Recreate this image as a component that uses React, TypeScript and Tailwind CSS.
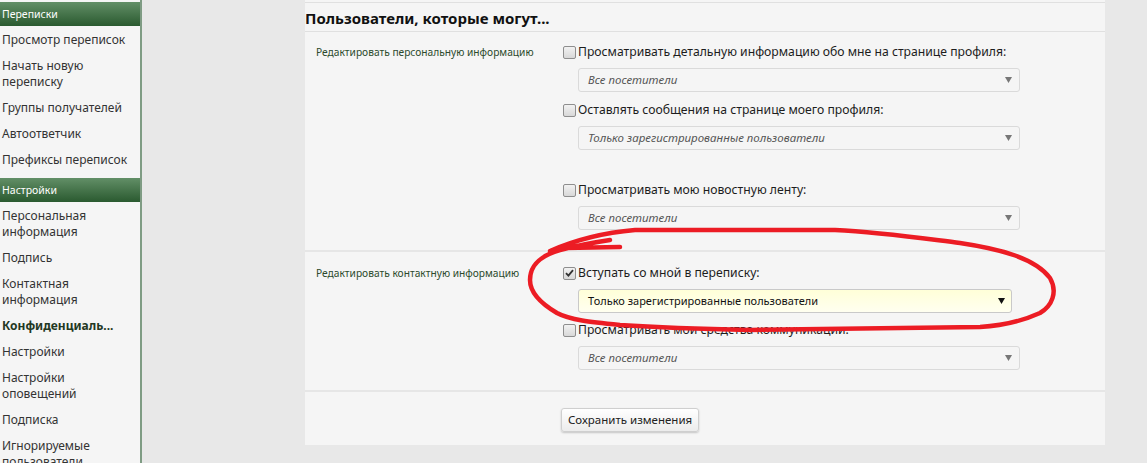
import React from "react";

type NavItem = {
  lines: string[];
  bold?: boolean;
};

type NavGroup = {
  title: string;
  items: NavItem[];
};

const navGroups: NavGroup[] = [
  {
    title: "Переписки",
    items: [
      { lines: ["Просмотр переписок"] },
      { lines: ["Начать новую", "переписку"] },
      { lines: ["Группы получателей"] },
      { lines: ["Автоответчик"] },
      { lines: ["Префиксы переписок"] },
    ],
  },
  {
    title: "Настройки",
    items: [
      { lines: ["Персональная", "информация"] },
      { lines: ["Подпись"] },
      { lines: ["Контактная", "информация"] },
      { lines: ["Конфиденциаль..."], bold: true },
      { lines: ["Настройки"] },
      { lines: ["Настройки", "оповещений"] },
      { lines: ["Подписка"] },
      { lines: ["Игнорируемые", "пользователи"] },
    ],
  },
];

function Sidebar() {
  return (
    <aside className="w-[142px] shrink-0 border-r-2 border-[#7f9c84] bg-[#f5f5f5]">
      {navGroups.map((group, gi) => (
        <div key={group.title}>
          <div
            className={`h-[24px] bg-gradient-to-b from-[#628f67] to-[#2a5a30] pl-[2px] text-[10.5px] leading-[24px] text-white ${
              gi === 0 ? "mt-[2px]" : "mt-[6px]"
            }`}
          >
            {group.title}
          </div>
          {group.items.map((item, i) => (
            <div
              key={i}
              className={`pb-[4px] pl-[2px] pt-[6px] text-[12px] leading-[16px] whitespace-nowrap ${
                item.bold ? "font-bold text-[#233823]" : "text-[#333333]"
              }`}
            >
              {item.lines.map((line, li) => (
                <div key={li}>{line}</div>
              ))}
            </div>
          ))}
        </div>
      ))}
    </aside>
  );
}

function Checkbox({ checked = false }: { checked?: boolean }) {
  return (
    <span className="flex h-[13px] w-[13px] shrink-0 items-center justify-center rounded-[2px] border border-[#8e8e8e] bg-gradient-to-b from-[#f2f2f2] to-[#d8d8d8]">
      {checked && (
        <svg width="9" height="8" viewBox="0 0 9 8">
          <path d="M1 4.2 L3.4 6.6 L8 1.2" fill="none" stroke="#333" strokeWidth="1.8" />
        </svg>
      )}
    </span>
  );
}

function Arrow({ dark = false }: { dark?: boolean }) {
  return (
    <svg width="7" height="6" viewBox="0 0 7 6">
      <path d="M0 0 H7 L3.5 6 Z" fill={dark ? "#111" : "#777"} />
    </svg>
  );
}

function Select({ value, active = false }: { value: string; active?: boolean }) {
  if (active) {
    return (
      <div className="ml-[15px] mt-[8px] flex h-[24px] w-[434px] items-center justify-between rounded-[3px] border border-[#c9c9c9] bg-gradient-to-b from-[#ffffd8] to-[#fffff0] pl-[9px] pr-[6px] text-[11px] text-[#111]">
        <span>{value}</span>
        <Arrow dark />
      </div>
    );
  }
  return (
    <div className="ml-[15px] mt-[8px] flex h-[24px] w-[442px] items-center justify-between rounded-[3px] border border-[#dadada] bg-[#f5f5f5] pl-[9px] pr-[7px] text-[11.5px] italic text-[#555]">
      <span>{value}</span>
      <Arrow />
    </div>
  );
}

function Option({
  label,
  value,
  checked,
  active,
  className = "",
}: {
  label: string;
  value: string;
  checked?: boolean;
  active?: boolean;
  className?: string;
}) {
  return (
    <div className={className}>
      <div className="flex h-[16px] items-center gap-[2px] text-[12.2px] leading-[16px] text-[#1d1d1d]">
        <Checkbox checked={checked} />
        <span className="whitespace-nowrap">{label}</span>
      </div>
      <Select value={value} active={active} />
    </div>
  );
}

export default function App() {
  return (
    <div className="relative flex h-[463px] overflow-hidden bg-[#e8e8e8] font-['Noto_Sans',sans-serif]">
      <Sidebar />

      <div className="pl-[163px]">
        <div className="w-[800px] bg-[#f5f5f5]">
          <div className="h-[2px]" />
          <div className="border-y border-[#e0e0e0] pb-[4px] pt-[6px] text-[15px] font-bold leading-[18px] text-[#111]">
            Пользователи, которые могут...
          </div>

          <section className="grid grid-cols-[258px_1fr] border-b-2 border-[#e6e6e6] pb-[20px] pt-[12px]">
            <div className="pl-[11px] text-[10.2px] leading-[16px] text-[#2c4a2c]">
              Редактировать персональную информацию
            </div>
            <div>
              <Option
                label="Просматривать детальную информацию обо мне на странице профиля:"
                value="Все посетители"
              />
              <Option
                className="mt-[10px]"
                label="Оставлять сообщения на странице моего профиля:"
                value="Только зарегистрированные пользователи"
              />
              <Option
                className="mt-[32px]"
                label="Просматривать мою новостную ленту:"
                value="Все посетители"
              />
            </div>
          </section>

          <section className="grid grid-cols-[258px_1fr] border-b-2 border-[#e6e6e6] pb-[20px] pt-[13px]">
            <div className="pl-[11px] text-[10.2px] leading-[16px] text-[#2c4a2c]">
              Редактировать контактную информацию
            </div>
            <div>
              <Option
                label="Вступать со мной в переписку:"
                value="Только зарегистрированные пользователи"
                checked
                active
              />
              <Option
                className="mt-[9px]"
                label="Просматривать мои средства коммуникации:"
                value="Все посетители"
              />
            </div>
          </section>

          <div className="pb-[13px] pl-[256px] pt-[14px]">
            <button className="h-[24px] rounded-[3px] border border-[#cfcfcf] bg-gradient-to-b from-[#ffffff] to-[#ececec] px-[6px] text-[11.5px] text-[#222] shadow-[0_1px_2px_rgba(0,0,0,0.2)]">
              Сохранить изменения
            </button>
          </div>
        </div>
      </div>

      <svg
        className="pointer-events-none absolute left-0 top-0"
        width="1147"
        height="463"
        viewBox="0 0 1147 463"
      >
        <path
          d="M620 247 L565 248 L550 251 C575 240 600 233 635 230 L835 230 C880 232 920 238 960 243 C1000 249 1035 258 1050 278 C1058 292 1052 306 1040 313 C1020 322 1000 326 980 327 L750 330 C700 329 650 327 620 325 C590 322 570 320 557 313 C540 303 530 292 530 280 C530 265 540 256 560 250 C575 246 590 243 610 240"
          fill="none"
          stroke="#ec1c24"
          strokeWidth="4.5"
          strokeLinecap="round"
          strokeLinejoin="round"
        />
      </svg>
    </div>
  );
}
